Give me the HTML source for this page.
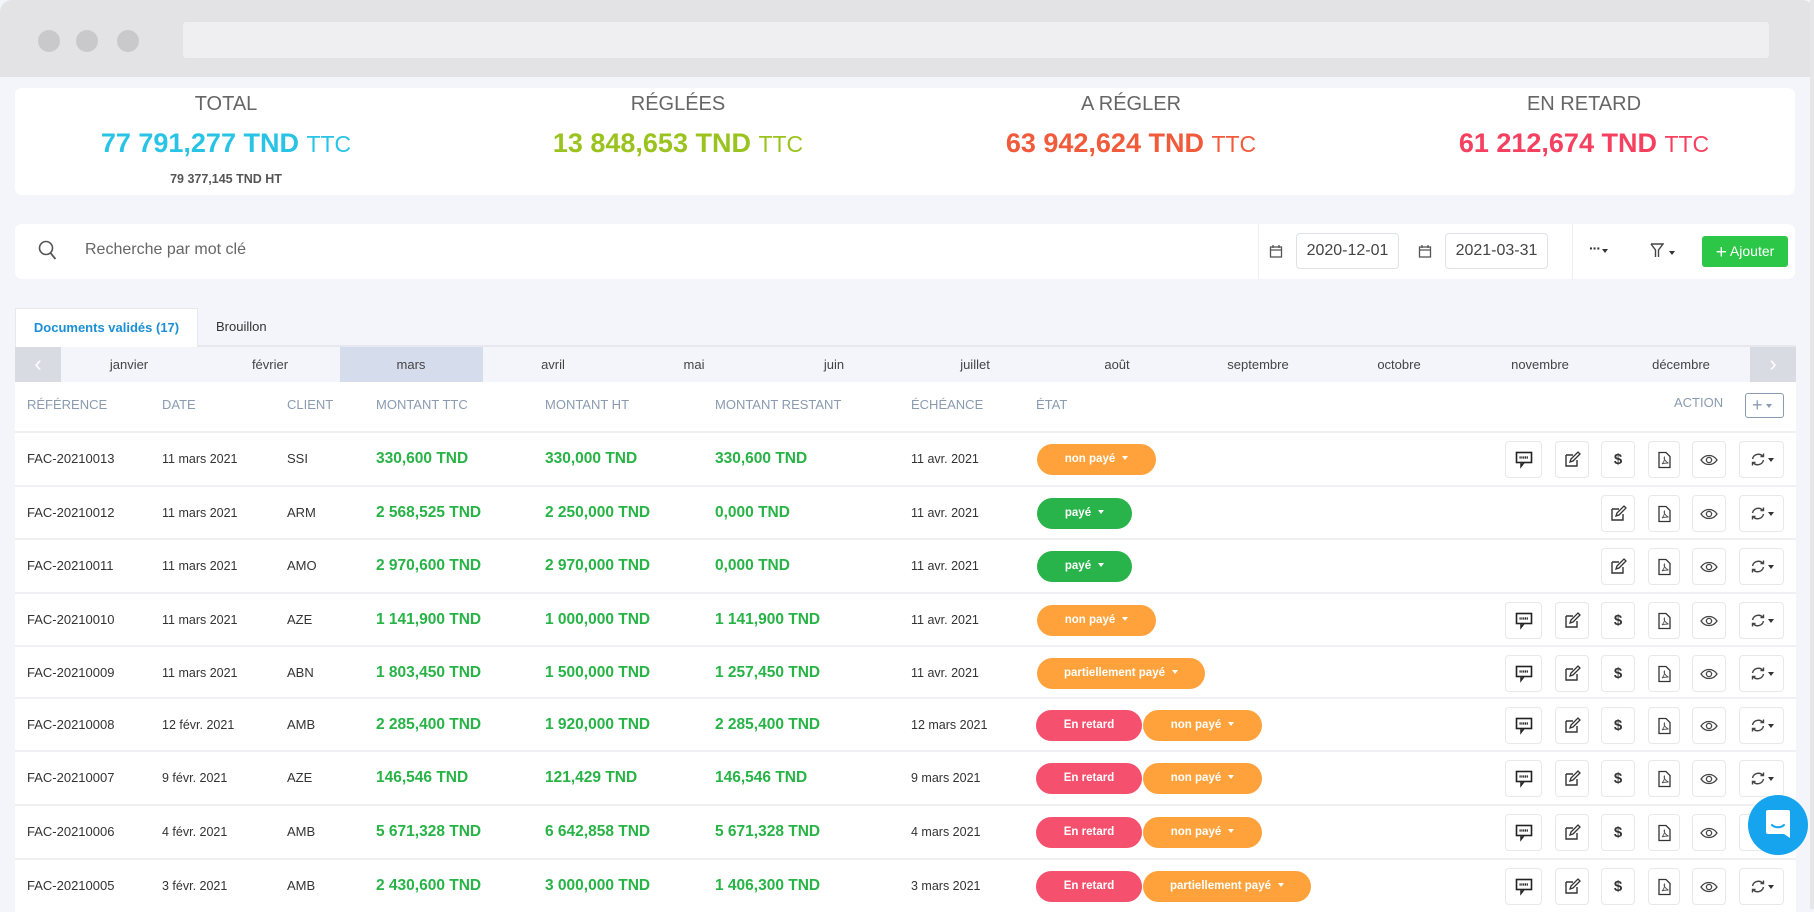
<!DOCTYPE html>
<html><head><meta charset="utf-8">
<style>
*{margin:0;padding:0;box-sizing:border-box}
body{width:1814px;height:909px;overflow:hidden;background:#f3f5fa;font-family:"Liberation Sans",sans-serif;position:relative;color:#333}
.a{position:absolute}
.bar{left:0;top:0;width:1814px;height:77px;background:#e3e3e5;border-radius:12px 12px 0 0}
.dot{width:22px;height:22px;border-radius:50%;background:#c9c9cc;top:30px}
.url{left:183px;top:22px;width:1586px;height:36px;background:#efeff1;border-radius:3px}
.card{background:#fff;border-radius:7px}
.col{width:452px;text-align:center}
.t{font-size:20px;color:#666;top:93px}
.amt{font-size:27px;font-weight:bold;top:128px}
.amt span{font-weight:normal;font-size:23px}
.h{top:384px;font-size:13px;color:#8a9bb0;line-height:42px}
.m{top:347px;font-size:13px;color:#444;line-height:35px;width:140px;text-align:center}
.row{left:15px;width:1781px;height:54px;background:#fff;border-top:2px solid #eef0f4}
.c{position:absolute;top:0;line-height:52px;font-size:13px;color:#333}
.d{font-size:12.5px}
.g{font-size:15.5px;font-weight:bold;color:#27b346}
.b{position:absolute;top:11px;height:31px;border-radius:16px;color:#fff;font-size:11.5px;font-weight:bold;line-height:31px;text-align:center}
.o{background:#ffa23b}.p{background:#28b44a}.r{background:#f5506e}
.b i{display:inline-block;border-left:3.5px solid transparent;border-right:3.5px solid transparent;border-top:4px solid #fff;margin-left:7px;vertical-align:2px}
.ib{position:absolute;top:8px;height:37px;border:1px solid #e6e8ec;border-radius:4px;background:#fff;display:flex;align-items:center;justify-content:center}
.ib svg{display:block}
.car{display:inline-block;border-left:3.5px solid transparent;border-right:3.5px solid transparent;border-top:4px solid #333;margin-left:2px}
</style></head><body>
<div class="a bar"></div>
<div class="a dot" style="left:38px"></div><div class="a dot" style="left:76px"></div><div class="a dot" style="left:117px"></div>
<div class="a url"></div>

<div class="a card" style="left:15px;top:88px;width:1780px;height:107px"></div>
<div class="a col t" style="left:0">TOTAL</div>
<div class="a col t" style="left:452px">RÉGLÉES</div>
<div class="a col t" style="left:905px">A RÉGLER</div>
<div class="a col t" style="left:1358px">EN RETARD</div>
<div class="a col amt" style="left:0;color:#29c3e6">77 791,277 TND <span>TTC</span></div>
<div class="a col amt" style="left:452px;color:#9bc31f">13 848,653 TND <span>TTC</span></div>
<div class="a col amt" style="left:905px;color:#f15a3b">63 942,624 TND <span>TTC</span></div>
<div class="a col amt" style="left:1358px;color:#f6405f">61 212,674 TND <span>TTC</span></div>
<div class="a col" style="left:0;top:172px;font-size:12.5px;font-weight:bold;color:#555">79 377,145 TND HT</div>

<div class="a card" style="left:15px;top:224px;width:1780px;height:55px"></div>
<svg class="a" style="left:38px;top:240px" width="20" height="22" viewBox="0 0 20 22"><circle cx="8" cy="8" r="6.5" fill="none" stroke="#555" stroke-width="1.6"/><path d="M12.5 13l5 6" stroke="#555" stroke-width="1.8"/></svg>
<div class="a" style="left:85px;top:241px;font-size:16px;color:#666">Recherche par mot clé</div>
<div class="a" style="left:1258px;top:224px;width:1px;height:55px;background:#eceef2"></div>
<div class="a" style="left:1572px;top:224px;width:1px;height:55px;background:#eceef2"></div>
<svg class="a" style="left:1269px;top:244px" width="14" height="14" viewBox="0 0 14 14"><rect x="1.5" y="3" width="11" height="10" fill="none" stroke="#555" stroke-width="1.3"/><path d="M1.5 6h11M4 1v3M10 1v3" stroke="#555" stroke-width="1.3"/></svg>
<svg class="a" style="left:1418px;top:244px" width="14" height="14" viewBox="0 0 14 14"><rect x="1.5" y="3" width="11" height="10" fill="none" stroke="#555" stroke-width="1.3"/><path d="M1.5 6h11M4 1v3M10 1v3" stroke="#555" stroke-width="1.3"/></svg>
<div class="a" style="left:1296px;top:233px;width:103px;height:36px;border:1px solid #dfe2e7;border-radius:4px;font-size:16px;color:#444;line-height:34px;text-align:center">2020-12-01</div>
<div class="a" style="left:1445px;top:233px;width:103px;height:36px;border:1px solid #dfe2e7;border-radius:4px;font-size:16px;color:#444;line-height:34px;text-align:center">2021-03-31</div>
<div class="a" style="left:1589px;top:240px;font-size:14px;color:#333;font-weight:bold;letter-spacing:-1px">···<span class="car"></span></div>
<svg class="a" style="left:1650px;top:243px" width="14" height="15" viewBox="0 0 14 15"><path d="M1 1h12L8.5 7v7M5.5 14V7L1 1" fill="none" stroke="#444" stroke-width="1.4"/></svg>
<span class="a car" style="left:1667px;top:251px"></span>
<div class="a" style="left:1702px;top:236px;width:86px;height:31px;background:#2dc748;border-radius:3px;color:#fff;font-size:14px;line-height:31px;text-align:center"><span style="font-size:19px;vertical-align:-2px">+</span> Ajouter</div>

<div class="a" style="left:15px;top:345px;width:1781px;height:2px;background:#e6e8ee"></div>
<div class="a" style="left:15px;top:308px;width:183px;height:39px;background:#fff;border:1px solid #e6e8ee;border-bottom:none;font-size:13px;font-weight:bold;color:#1b8fd6;line-height:38px;text-align:center">Documents validés (17)</div>
<div class="a" style="left:216px;top:308px;font-size:13px;color:#333;line-height:38px">Brouillon</div>
<div class="a" style="left:15px;top:347px;width:1781px;height:35px;background:#f3f5fa"></div>
<div class="a" style="left:15px;top:347px;width:46px;height:35px;background:#d8dbe1;color:#fff;font-size:22px;text-align:center;line-height:33px">‹</div>
<div class="a" style="left:1750px;top:347px;width:46px;height:35px;background:#d8dbe1;color:#fff;font-size:22px;text-align:center;line-height:33px">›</div>
<div class="a" style="left:340px;top:347px;width:143px;height:35px;background:#d5dcec"></div>
<div class="a m" style="left:59px">janvier</div><div class="a m" style="left:200px">février</div><div class="a m" style="left:341px">mars</div><div class="a m" style="left:483px">avril</div><div class="a m" style="left:624px">mai</div><div class="a m" style="left:764px">juin</div><div class="a m" style="left:905px">juillet</div><div class="a m" style="left:1047px">août</div><div class="a m" style="left:1188px">septembre</div><div class="a m" style="left:1329px">octobre</div><div class="a m" style="left:1470px">novembre</div><div class="a m" style="left:1611px">décembre</div>

<div class="a" style="left:15px;top:382px;width:1781px;height:49px;background:#fff"></div>
<div class="a h" style="left:27px">RÉFÉRENCE</div><div class="a h" style="left:162px">DATE</div><div class="a h" style="left:287px">CLIENT</div><div class="a h" style="left:376px">MONTANT TTC</div><div class="a h" style="left:545px">MONTANT HT</div><div class="a h" style="left:715px">MONTANT RESTANT</div><div class="a h" style="left:911px">ÉCHÉANCE</div><div class="a h" style="left:1036px">ÉTAT</div>
<div class="a h" style="left:1674px;top:382px">ACTION</div>
<div class="a" style="left:1745px;top:393px;width:39px;height:25px;border:1px solid #8a9bb0;border-radius:3px;color:#8a9bb0;font-size:18px;line-height:22px;padding-left:6px">+<span class="car" style="border-top-color:#8a9bb0;margin-left:3px;vertical-align:3px"></span></div>

<!-- icon defs -->
<svg width="0" height="0" style="position:absolute"><defs>
<g id="cm"><rect x="1.5" y="1.5" width="15" height="10" fill="none" stroke="#222" stroke-width="1.6"/><path d="M6 11.5v4l3-4" fill="none" stroke="#222" stroke-width="1.5"/><path d="M4.5 6.5h9" stroke="#222" stroke-width="2.2" stroke-dasharray="1.2 0.6"/></g>
<g id="ed"><path d="M2 4h7M2 4v11h11V9" fill="none" stroke="#333" stroke-width="1.4"/><path d="M6 11l1-3 7-7 2 2-7 7z" fill="none" stroke="#333" stroke-width="1.3"/></g>
<g id="pd"><path d="M3 1.5h7l4 4v11H3z" fill="none" stroke="#333" stroke-width="1.3"/><path d="M6 13c2-2 3-5 2.5-7-1 1 0 4 4 6-2 0-4 0-6.5 1" fill="none" stroke="#555" stroke-width="0.9"/></g>
<g id="ey"><path d="M1 7c4-6 12-6 16 0-4 6-12 6-16 0z" fill="none" stroke="#444" stroke-width="1.3"/><circle cx="9" cy="7" r="2.6" fill="none" stroke="#444" stroke-width="1.3"/></g>
<g id="sy"><path d="M13 4.5A6 6 0 0 0 2.5 7M3 10.5A6 6 0 0 0 13.5 8" fill="none" stroke="#444" stroke-width="1.4"/><path d="M10.5 4.5h3v-3M5.5 10.5h-3v3" fill="none" stroke="#444" stroke-width="1.4"/></g>
</defs></svg>

<!-- ROWS -->
<div class="a row" style="top:431px"><div class="c" style="left:12px">FAC-20210013</div><div class="c d" style="left:147px">11 mars 2021</div><div class="c" style="left:272px">SSI</div><div class="c g" style="left:361px">330,600 TND</div><div class="c g" style="left:530px">330,000 TND</div><div class="c g" style="left:700px">330,600 TND</div><div class="c d" style="left:896px">11 avr. 2021</div><div class="b o" style="left:1022px;width:119px">non payé<i></i></div>
<div class="ib" style="left:1490px;width:37px"><svg width="18" height="18"><use href="#cm"/></svg></div><div class="ib" style="left:1540px;width:34px"><svg width="17" height="17"><use href="#ed"/></svg></div><div class="ib" style="left:1586px;width:34px;font-size:15px;font-weight:bold">$</div><div class="ib" style="left:1633px;width:32px"><svg width="17" height="18"><use href="#pd"/></svg></div><div class="ib" style="left:1677px;width:34px"><svg width="18" height="14"><use href="#ey"/></svg></div><div class="ib" style="left:1724px;width:45px"><svg width="16" height="15"><use href="#sy"/></svg><span class="car"></span></div></div>

<div class="a row" style="top:485px"><div class="c" style="left:12px">FAC-20210012</div><div class="c d" style="left:147px">11 mars 2021</div><div class="c" style="left:272px">ARM</div><div class="c g" style="left:361px">2 568,525 TND</div><div class="c g" style="left:530px">2 250,000 TND</div><div class="c g" style="left:700px">0,000 TND</div><div class="c d" style="left:896px">11 avr. 2021</div><div class="b p" style="left:1022px;width:95px">payé<i></i></div>
<div class="ib" style="left:1586px;width:34px"><svg width="17" height="17"><use href="#ed"/></svg></div><div class="ib" style="left:1633px;width:32px"><svg width="17" height="18"><use href="#pd"/></svg></div><div class="ib" style="left:1677px;width:34px"><svg width="18" height="14"><use href="#ey"/></svg></div><div class="ib" style="left:1724px;width:45px"><svg width="16" height="15"><use href="#sy"/></svg><span class="car"></span></div></div>

<div class="a row" style="top:538px"><div class="c" style="left:12px">FAC-20210011</div><div class="c d" style="left:147px">11 mars 2021</div><div class="c" style="left:272px">AMO</div><div class="c g" style="left:361px">2 970,600 TND</div><div class="c g" style="left:530px">2 970,000 TND</div><div class="c g" style="left:700px">0,000 TND</div><div class="c d" style="left:896px">11 avr. 2021</div><div class="b p" style="left:1022px;width:95px">payé<i></i></div>
<div class="ib" style="left:1586px;width:34px"><svg width="17" height="17"><use href="#ed"/></svg></div><div class="ib" style="left:1633px;width:32px"><svg width="17" height="18"><use href="#pd"/></svg></div><div class="ib" style="left:1677px;width:34px"><svg width="18" height="14"><use href="#ey"/></svg></div><div class="ib" style="left:1724px;width:45px"><svg width="16" height="15"><use href="#sy"/></svg><span class="car"></span></div></div>

<div class="a row" style="top:592px"><div class="c" style="left:12px">FAC-20210010</div><div class="c d" style="left:147px">11 mars 2021</div><div class="c" style="left:272px">AZE</div><div class="c g" style="left:361px">1 141,900 TND</div><div class="c g" style="left:530px">1 000,000 TND</div><div class="c g" style="left:700px">1 141,900 TND</div><div class="c d" style="left:896px">11 avr. 2021</div><div class="b o" style="left:1022px;width:119px">non payé<i></i></div>
<div class="ib" style="left:1490px;width:37px"><svg width="18" height="18"><use href="#cm"/></svg></div><div class="ib" style="left:1540px;width:34px"><svg width="17" height="17"><use href="#ed"/></svg></div><div class="ib" style="left:1586px;width:34px;font-size:15px;font-weight:bold">$</div><div class="ib" style="left:1633px;width:32px"><svg width="17" height="18"><use href="#pd"/></svg></div><div class="ib" style="left:1677px;width:34px"><svg width="18" height="14"><use href="#ey"/></svg></div><div class="ib" style="left:1724px;width:45px"><svg width="16" height="15"><use href="#sy"/></svg><span class="car"></span></div></div>

<div class="a row" style="top:645px"><div class="c" style="left:12px">FAC-20210009</div><div class="c d" style="left:147px">11 mars 2021</div><div class="c" style="left:272px">ABN</div><div class="c g" style="left:361px">1 803,450 TND</div><div class="c g" style="left:530px">1 500,000 TND</div><div class="c g" style="left:700px">1 257,450 TND</div><div class="c d" style="left:896px">11 avr. 2021</div><div class="b o" style="left:1022px;width:168px">partiellement payé<i></i></div>
<div class="ib" style="left:1490px;width:37px"><svg width="18" height="18"><use href="#cm"/></svg></div><div class="ib" style="left:1540px;width:34px"><svg width="17" height="17"><use href="#ed"/></svg></div><div class="ib" style="left:1586px;width:34px;font-size:15px;font-weight:bold">$</div><div class="ib" style="left:1633px;width:32px"><svg width="17" height="18"><use href="#pd"/></svg></div><div class="ib" style="left:1677px;width:34px"><svg width="18" height="14"><use href="#ey"/></svg></div><div class="ib" style="left:1724px;width:45px"><svg width="16" height="15"><use href="#sy"/></svg><span class="car"></span></div></div>

<div class="a row" style="top:697px"><div class="c" style="left:12px">FAC-20210008</div><div class="c d" style="left:147px">12 févr. 2021</div><div class="c" style="left:272px">AMB</div><div class="c g" style="left:361px">2 285,400 TND</div><div class="c g" style="left:530px">1 920,000 TND</div><div class="c g" style="left:700px">2 285,400 TND</div><div class="c d" style="left:896px">12 mars 2021</div><div class="b r" style="left:1021px;width:106px">En retard</div><div class="b o" style="left:1128px;width:119px">non payé<i></i></div>
<div class="ib" style="left:1490px;width:37px"><svg width="18" height="18"><use href="#cm"/></svg></div><div class="ib" style="left:1540px;width:34px"><svg width="17" height="17"><use href="#ed"/></svg></div><div class="ib" style="left:1586px;width:34px;font-size:15px;font-weight:bold">$</div><div class="ib" style="left:1633px;width:32px"><svg width="17" height="18"><use href="#pd"/></svg></div><div class="ib" style="left:1677px;width:34px"><svg width="18" height="14"><use href="#ey"/></svg></div><div class="ib" style="left:1724px;width:45px"><svg width="16" height="15"><use href="#sy"/></svg><span class="car"></span></div></div>

<div class="a row" style="top:750px"><div class="c" style="left:12px">FAC-20210007</div><div class="c d" style="left:147px">9 févr. 2021</div><div class="c" style="left:272px">AZE</div><div class="c g" style="left:361px">146,546 TND</div><div class="c g" style="left:530px">121,429 TND</div><div class="c g" style="left:700px">146,546 TND</div><div class="c d" style="left:896px">9 mars 2021</div><div class="b r" style="left:1021px;width:106px">En retard</div><div class="b o" style="left:1128px;width:119px">non payé<i></i></div>
<div class="ib" style="left:1490px;width:37px"><svg width="18" height="18"><use href="#cm"/></svg></div><div class="ib" style="left:1540px;width:34px"><svg width="17" height="17"><use href="#ed"/></svg></div><div class="ib" style="left:1586px;width:34px;font-size:15px;font-weight:bold">$</div><div class="ib" style="left:1633px;width:32px"><svg width="17" height="18"><use href="#pd"/></svg></div><div class="ib" style="left:1677px;width:34px"><svg width="18" height="14"><use href="#ey"/></svg></div><div class="ib" style="left:1724px;width:45px"><svg width="16" height="15"><use href="#sy"/></svg><span class="car"></span></div></div>

<div class="a row" style="top:804px"><div class="c" style="left:12px">FAC-20210006</div><div class="c d" style="left:147px">4 févr. 2021</div><div class="c" style="left:272px">AMB</div><div class="c g" style="left:361px">5 671,328 TND</div><div class="c g" style="left:530px">6 642,858 TND</div><div class="c g" style="left:700px">5 671,328 TND</div><div class="c d" style="left:896px">4 mars 2021</div><div class="b r" style="left:1021px;width:106px">En retard</div><div class="b o" style="left:1128px;width:119px">non payé<i></i></div>
<div class="ib" style="left:1490px;width:37px"><svg width="18" height="18"><use href="#cm"/></svg></div><div class="ib" style="left:1540px;width:34px"><svg width="17" height="17"><use href="#ed"/></svg></div><div class="ib" style="left:1586px;width:34px;font-size:15px;font-weight:bold">$</div><div class="ib" style="left:1633px;width:32px"><svg width="17" height="18"><use href="#pd"/></svg></div><div class="ib" style="left:1677px;width:34px"><svg width="18" height="14"><use href="#ey"/></svg></div><div class="ib" style="left:1724px;width:45px"><svg width="16" height="15"><use href="#sy"/></svg><span class="car"></span></div></div>

<div class="a row" style="top:858px"><div class="c" style="left:12px">FAC-20210005</div><div class="c d" style="left:147px">3 févr. 2021</div><div class="c" style="left:272px">AMB</div><div class="c g" style="left:361px">2 430,600 TND</div><div class="c g" style="left:530px">3 000,000 TND</div><div class="c g" style="left:700px">1 406,300 TND</div><div class="c d" style="left:896px">3 mars 2021</div><div class="b r" style="left:1021px;width:106px">En retard</div><div class="b o" style="left:1128px;width:168px">partiellement payé<i></i></div>
<div class="ib" style="left:1490px;width:37px"><svg width="18" height="18"><use href="#cm"/></svg></div><div class="ib" style="left:1540px;width:34px"><svg width="17" height="17"><use href="#ed"/></svg></div><div class="ib" style="left:1586px;width:34px;font-size:15px;font-weight:bold">$</div><div class="ib" style="left:1633px;width:32px"><svg width="17" height="18"><use href="#pd"/></svg></div><div class="ib" style="left:1677px;width:34px"><svg width="18" height="14"><use href="#ey"/></svg></div><div class="ib" style="left:1724px;width:45px"><svg width="16" height="15"><use href="#sy"/></svg><span class="car"></span></div></div>

<div class="a" style="left:1748px;top:795px;width:60px;height:60px;border-radius:50%;background:#16a4ee"></div>
<svg class="a" style="left:1764px;top:808px" width="28" height="32" viewBox="0 0 28 32"><path d="M4 2h20a2 2 0 0 1 2 2v26l-6-4H4a2 2 0 0 1-2-2V4a2 2 0 0 1 2-2z" fill="#fff"/><path d="M8 17c3 3 9 3 12 0" fill="none" stroke="#16a4ee" stroke-width="2" stroke-linecap="round"/></svg>
<div class="a" style="left:1810px;top:0;width:4px;height:909px;background:#e6e6e8"></div>
</body></html>
